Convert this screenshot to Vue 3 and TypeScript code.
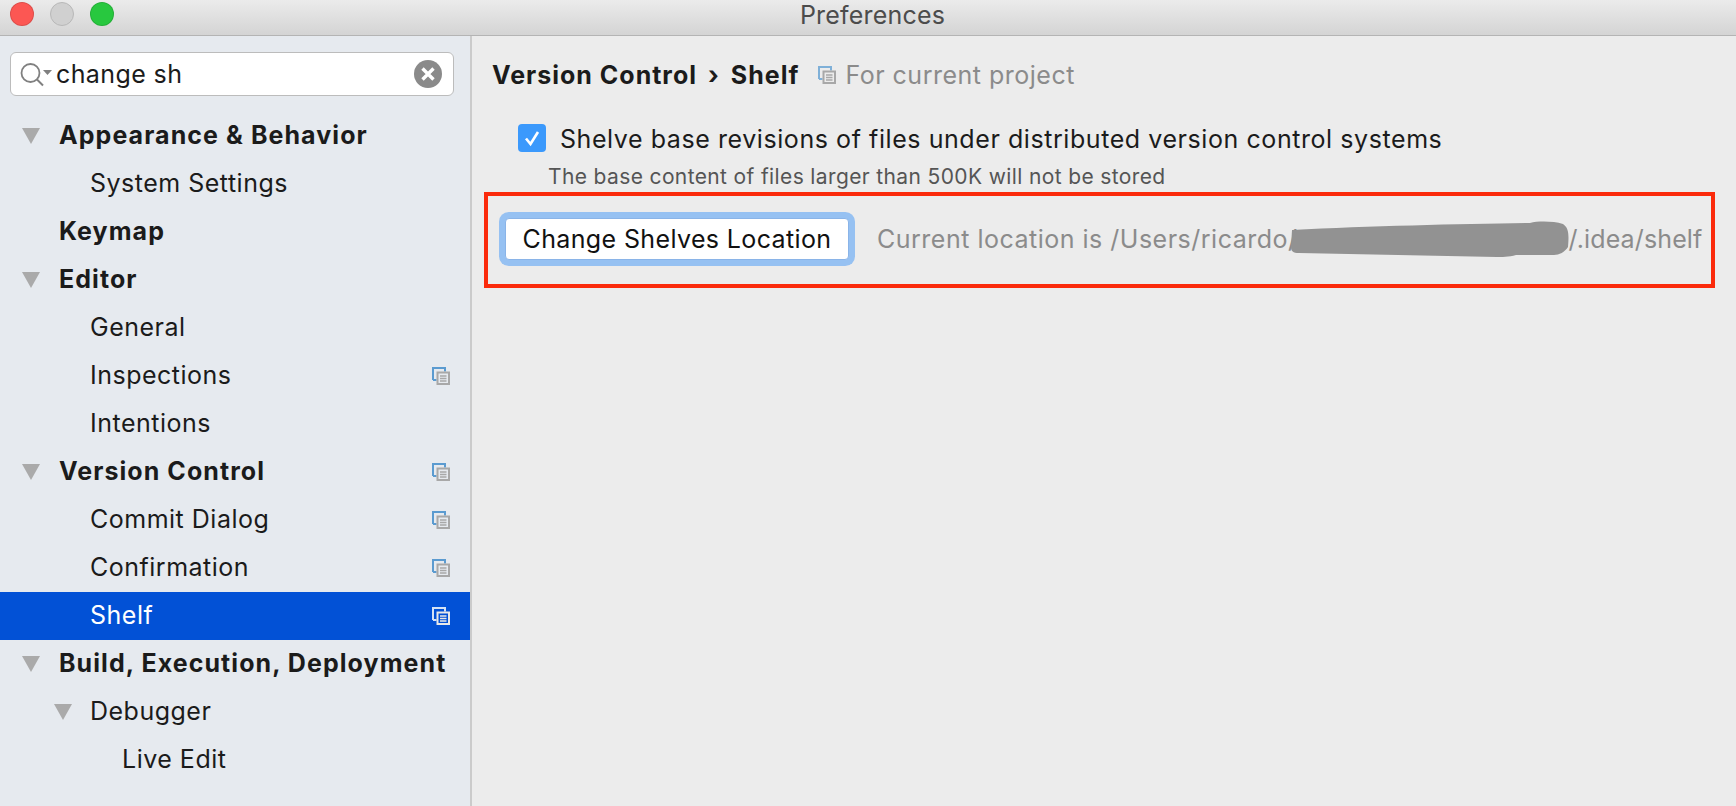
<script setup lang="ts">
interface TreeRow {
  label: string
  level: number
  bold?: boolean
  arrow?: boolean
  project?: boolean
  selected?: boolean
}

const rows: TreeRow[] = [
  { label: 'Appearance & Behavior', level: 0, bold: true, arrow: true },
  { label: 'System Settings', level: 1 },
  { label: 'Keymap', level: 0, bold: true },
  { label: 'Editor', level: 0, bold: true, arrow: true },
  { label: 'General', level: 1 },
  { label: 'Inspections', level: 1, project: true },
  { label: 'Intentions', level: 1 },
  { label: 'Version Control', level: 0, bold: true, arrow: true, project: true },
  { label: 'Commit Dialog', level: 1, project: true },
  { label: 'Confirmation', level: 1, project: true },
  { label: 'Shelf', level: 1, project: true, selected: true },
  { label: 'Build, Execution, Deployment', level: 0, bold: true, arrow: true },
  { label: 'Debugger', level: 1, arrow: true },
  { label: 'Live Edit', level: 2 }
]
</script>

<template>
  <div class="window">
    <header class="titlebar">
      <div class="lights">
        <span class="light red"></span>
        <span class="light grey"></span>
        <span class="light green"></span>
      </div>
      <span class="title">Preferences</span>
    </header>

    <div class="body">
      <aside class="sidebar">
        <div class="search">
          <svg class="search-icon" width="34" height="28" viewBox="0 0 34 28">
            <circle cx="10.500" cy="13" r="9" fill="none" stroke="#808080" stroke-width="1.800" />
            <path d="M17 19.500L23 25.500" stroke="#808080" stroke-width="2" fill="none" />
            <path d="M23 10h9l-4.500 5z" fill="#808080" />
          </svg>
          <span class="search-text">change sh</span>
          <svg class="clear-icon" width="28" height="28" viewBox="0 0 28 28">
            <circle cx="14" cy="14" r="14" fill="#8a8a8a" />
            <path d="M8.500 8.500l11 11M19.500 8.500l-11 11" stroke="#fff" stroke-width="3.400" fill="none" />
          </svg>
        </div>

        <ul class="tree">
          <li
            v-for="row in rows"
            :key="row.label"
            class="row"
            :class="['level-' + row.level, { selected: row.selected, bold: row.bold }]"
          >
            <span class="arrow-slot"><i v-if="row.arrow" class="arrow"></i></span>
            <span class="label">{{ row.label }}</span>
            <svg v-if="row.project" class="project-icon" width="18" height="18" viewBox="0 0 18 18">
              <path d="M1 13V1h12v3.500" fill="none" :stroke="row.selected ? '#d5e2f5' : '#5b9bd0'" stroke-width="2" />
              <path d="M1 13h3.500" fill="none" :stroke="row.selected ? '#d5e2f5' : '#5b9bd0'" stroke-width="2" />
              <rect x="5.500" y="5.500" width="11.500" height="11.500" fill="none" :stroke="row.selected ? '#e8e8e8' : '#a8a8a8'" stroke-width="2" />
              <path d="M8 9h6.500M8 11.500h6.500M8 14h6.500" :stroke="row.selected ? '#e8e8e8' : '#a8a8a8'" stroke-width="1.300" />
            </svg>
          </li>
        </ul>
      </aside>

      <main class="panel">
        <div class="crumbs">
          <span class="crumb">Version Control</span>
          <span class="crumb-sep">›</span>
          <span class="crumb">Shelf</span>
          <svg class="crumb-icon" width="18" height="18" viewBox="0 0 18 18">
            <path d="M1 13V1h12v3.500M1 13h3.500" fill="none" stroke="#7fb0d8" stroke-width="2" />
            <rect x="5.500" y="5.500" width="11.500" height="11.500" fill="none" stroke="#a8a8a8" stroke-width="2" />
            <path d="M8 9h6.500M8 11.500h6.500M8 14h6.500" stroke="#a8a8a8" stroke-width="1.300" />
          </svg>
          <span class="crumb-note">For current project</span>
        </div>

        <label class="check-row">
          <span class="checkbox">
            <svg width="28" height="28" viewBox="0 0 28 28">
              <path d="M8 14.500L12.500 20L20 8" fill="none" stroke="#fff" stroke-width="2.600" />
            </svg>
          </span>
          <span class="check-text">Shelve base revisions of files under distributed version control systems</span>
        </label>
        <p class="check-hint">The base content of files larger than 500K will not be stored</p>

        <section class="highlight">
          <button class="action" type="button">Change Shelves Location</button>
          <span class="location">Current location is /Users/ricardo/<svg class="scribble" width="278" height="36" viewBox="0 0 278 36"><path d="M1 9C80 5 170 3 239 2C247 0 262 0 272 3C278 7 278 14 277 26C274 31 268 34 263 34L225 34C218 36 210 36 206 36L8 32C2 32 0 30 0 26z" fill="#929292" /></svg><span class="location-tail">/.idea/shelf</span></span>
        </section>
      </main>
    </div>
  </div>
</template>

<style scoped>
.window {
  width: 1736px;
  height: 806px;
  overflow: hidden;
  display: flex;
  flex-direction: column;
  background: #ececec;
  font-family: Inter, "Liberation Sans", sans-serif;
  color: #1b1b1b;
}

.titlebar {
  flex: none;
  height: 36px;
  box-sizing: border-box;
  position: relative;
  display: flex;
  align-items: center;
  justify-content: center;
  background: linear-gradient(#ebebeb, #d4d4d4);
  border-bottom: 1px solid #b4b4b4;
}

.lights {
  position: absolute;
  left: 10px;
  top: 2px;
  display: flex;
  gap: 16px;
}

.light {
  width: 24px;
  height: 24px;
  box-sizing: border-box;
  border-radius: 50%;
  border: 1px solid rgba(0, 0, 0, 0.12);
}

.red { background: #fc5753; }
.grey { background: #d0d0d0; border-color: #b8b8b8; }
.green { background: #28c83f; }

.title {
  font-size: 25px;
  letter-spacing: 0.2px;
  color: #4c4c4c;
  margin: -6px 0 0 9px;
}

.body {
  flex: 1;
  display: flex;
  min-height: 0;
}

.sidebar {
  width: 472px;
  flex: none;
  box-sizing: border-box;
  background: #e6eaef;
  border-right: 2px solid #cbcbcb;
  padding-top: 16px;
}

.search {
  width: 444px;
  height: 44px;
  margin-left: 10px;
  box-sizing: border-box;
  padding: 0 11px 0 9px;
  display: flex;
  align-items: center;
  background: #fff;
  border: 1px solid #bcbcbc;
  border-radius: 6px;
}

.search-icon {
  flex: none;
  margin-right: 2px;
}

.search-text {
  flex: 1;
  font-size: 25px;
  letter-spacing: 0.4px;
}

.tree {
  list-style: none;
  margin: 16px 0 0;
  padding: 0;
}

.row {
  height: 48px;
  box-sizing: border-box;
  display: flex;
  align-items: center;
  font-size: 25px;
  letter-spacing: 0.5px;
  padding-right: 20px;
}

.row.bold {
  font-weight: 700;
  letter-spacing: 1.07px;
}

.row.bold .label { margin-left: 1px; }

.row.selected {
  background: #0251d6;
  color: #fff;
}

.level-0 { padding-left: 22px; }
.level-1 { padding-left: 54px; }
.level-2 { padding-left: 86px; }

.arrow-slot {
  width: 36px;
  flex: none;
}

.arrow {
  display: block;
  width: 0;
  height: 0;
  border-left: 9px solid transparent;
  border-right: 9px solid transparent;
  border-top: 16px solid #aaa;
}

.label {
  flex: 1;
  white-space: nowrap;
  margin-bottom: 2px;
}

.panel {
  flex: 1;
  min-width: 0;
  padding-left: 12px;
}

.crumbs {
  height: 46px;
  margin-top: 16px;
  padding-left: 8px;
  display: flex;
  align-items: center;
  font-size: 25px;
}

.crumb {
  font-weight: 700;
  letter-spacing: 1px;
}

.crumb-sep { margin: 0 12px 0 11px; font-weight: 700; }
.crumb-icon { margin: 0 9px 0 19px; flex: none; }
.crumb-note { color: #8b8b8b; letter-spacing: 0.5px; }

.check-row {
  height: 28px;
  margin: 26px 0 0 34px;
  display: flex;
  align-items: center;
  font-size: 25px;
  letter-spacing: 0.57px;
}

.checkbox {
  width: 28px;
  height: 28px;
  flex: none;
  margin-right: 14px;
  border-radius: 4px;
  background: #3b99fc;
}

.checkbox svg { display: block; }

.check-text { margin-top: 2px; }

.check-hint {
  margin: 13px 0 0 64px;
  font-size: 21px;
  letter-spacing: 0.37px;
  line-height: 24px;
  color: #555;
}

.highlight {
  width: 1231px;
  height: 96px;
  margin-top: 3px;
  box-sizing: border-box;
  border: 4px solid #fb2a0b;
  padding: 0 0 2px 17px;
  display: flex;
  align-items: center;
}

.action {
  width: 344px;
  height: 42px;
  flex: none;
  padding: 0;
  font: inherit;
  font-size: 25px;
  letter-spacing: 0.37px;
  white-space: nowrap;
  color: #111;
  background: #fff;
  border: 1px solid #8ab4e8;
  border-radius: 4px;
  box-shadow: 0 0 0 6px #96c1f2;
}

.location {
  margin-left: 28px;
  font-size: 25px;
  letter-spacing: 0.5px;
  color: #8b8b8b;
  white-space: nowrap;
  display: flex;
  align-items: center;
}

.scribble {
  flex: none;
  margin-left: -7px;
}

.location-tail { letter-spacing: 0.13px; }
</style>

<style>
html, body { margin: 0; overflow: hidden; }
</style>
